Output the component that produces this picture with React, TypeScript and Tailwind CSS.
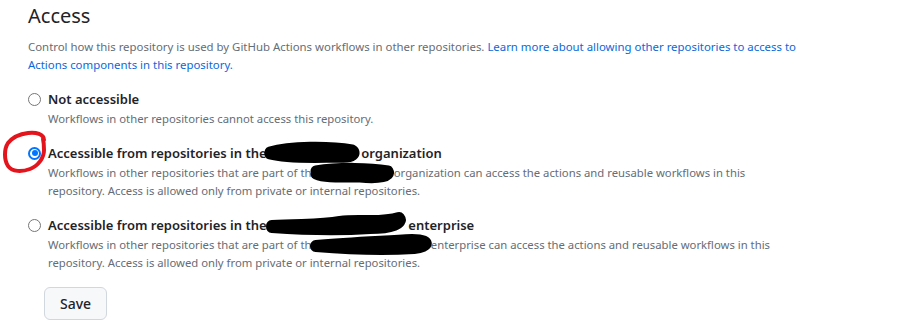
import React from "react";

const Radio = ({ checked }: { checked?: boolean }) =>
  checked ? (
    <span className="mt-[3.5px] flex h-[13px] w-[13px] shrink-0 items-center justify-center rounded-full border-2 border-[#0075ff] bg-white">
      <span className="h-[6px] w-[6px] rounded-full bg-[#0075ff]" />
    </span>
  ) : (
    <span className="mt-[3.5px] h-[13px] w-[13px] shrink-0 rounded-full border border-[#767676] bg-white" />
  );

// blank space where the org/enterprise name was blacked out
const Gap = ({ w }: { w: number }) => <span className="inline-block" style={{ width: w }} />;

const Option = ({
  checked,
  title,
  children,
}: {
  checked?: boolean;
  title: React.ReactNode;
  children: React.ReactNode;
}) => (
  <div className="flex gap-[7px]">
    <Radio checked={checked} />
    <div>
      <div className="text-[13px] font-semibold leading-[20px] text-[#1f2328]">{title}</div>
      <p className="mt-px text-[11.3px] leading-[18px] text-[#656d76]">{children}</p>
    </div>
  </div>
);

export default function App() {
  return (
    <div className="relative h-[335px] w-[902px] overflow-hidden bg-white font-['Noto_Sans',sans-serif]">
      <div className="w-[800px] pl-[28px] pt-px">
        <h2 className="text-[20px] leading-[30px] text-[#1f2328]">Access</h2>
        <p className="mt-[7px] text-[11.4px] leading-[18px] text-[#656d76]">
          Control how this repository is used by GitHub Actions workflows in other repositories.{" "}
          <a className="text-[#0969da]" href="#">
            Learn more about allowing other repositories to access to Actions components in this repository.
          </a>
        </p>

        <div className="mt-[15px] flex flex-col gap-[15px]">
          <Option title="Not accessible">Workflows in other repositories cannot access this repository.</Option>
          <Option
            checked
            title={
              <>
                Accessible from repositories in the <Gap w={88} /> organization
              </>
            }
          >
            Workflows in other repositories that are part of the <Gap w={73} />organization can access the
            actions and reusable workflows in this repository. Access is allowed only from private or internal
            repositories.
          </Option>
          <Option
            title={
              <>
                Accessible from repositories in the <Gap w={135} /> enterprise
              </>
            }
          >
            Workflows in other repositories that are part of the <Gap w={110} />enterprise can access the
            actions and reusable workflows in this repository. Access is allowed only from private or internal
            repositories.
          </Option>
        </div>

        <button className="ml-[16px] mt-[15px] h-[33px] w-[63px] rounded-[6px] border border-[#d0d7de] bg-[#f6f8fa] text-[14px] font-medium text-[#1f2328]">
          Save
        </button>
      </div>

      {/* redaction marks and the red annotation drawn on top of the screenshot */}
      <svg className="pointer-events-none absolute left-0 top-0" width="902" height="335">
        <g stroke="#000" strokeLinecap="round" strokeLinejoin="round" fill="none">
          <path d="M270 152 C290 146 330 146 352 150 C357 153 353 158 340 157 C310 158 285 158 270 154" strokeWidth="11" />
          <path d="M316 171 C340 167 370 168 388 171 C391 176 380 179 360 177 C340 177 325 178 316 174" strokeWidth="11" />
          <path d="M272 226 C300 224 320 226 340 222 C360 219 380 224 399 218 C403 223 392 228 370 228 C340 230 300 229 272 227" strokeWidth="12" />
          <path d="M316 246 C350 243 380 242 412 240 C430 240 430 246 414 248 C380 250 340 248 316 246" strokeWidth="12" />
        </g>
        <path
          d="M44 140 C44 134 36 132 28 133 C20 134 12 138 8 143 C4 149 4 160 8 166 C12 172 22 172 30 169 C38 166 44 158 44 150 C44 146 44 143 43 139"
          stroke="#e4141c"
          strokeWidth="4"
          fill="none"
          strokeLinecap="round"
        />
      </svg>
    </div>
  );
}
